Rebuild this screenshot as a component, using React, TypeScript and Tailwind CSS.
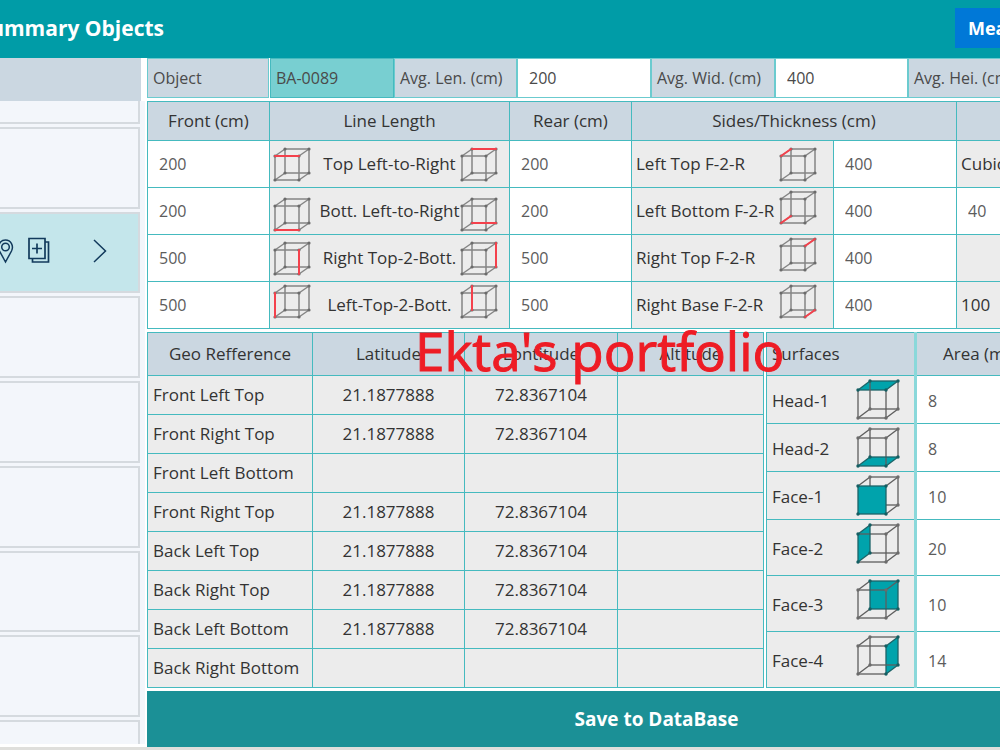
import type { ReactNode } from "react"
import clsx from "clsx"

type Point = [number, number]
type Vertex = "ftl" | "ftr" | "fbl" | "fbr" | "btl" | "btr" | "bbl" | "bbr"

interface LineRow {
	front: string
	label: string
	frontEdge: [Vertex, Vertex]
	rearEdge: [Vertex, Vertex]
	rear: string
	side: string
	sideEdge: [Vertex, Vertex]
	thickness: string
	align: string
	sideAlign: string
}

interface SurfaceRow {
	name: string
	face: Vertex[]
	area: string
	height: string
}

const EDGES: [Vertex, Vertex][] = [
	["ftl", "ftr"],
	["fbl", "fbr"],
	["ftl", "fbl"],
	["ftr", "fbr"],
	["btl", "btr"],
	["bbl", "bbr"],
	["btl", "bbl"],
	["btr", "bbr"],
	["ftl", "btl"],
	["ftr", "btr"],
	["fbl", "bbl"],
	["fbr", "bbr"],
]

// f/b = front/back, t/b = top/bottom, l/r = left/right
const SMALL_CUBE: Record<Vertex, Point> = {
	ftl: [2, 9],
	ftr: [26, 9],
	fbl: [2, 33],
	fbr: [26, 33],
	btl: [12, 2],
	btr: [36, 2],
	bbl: [12, 26],
	bbr: [36, 26],
}

const LARGE_CUBE: Record<Vertex, Point> = {
	ftl: [2, 11],
	ftr: [30, 11],
	fbl: [2, 39],
	fbr: [30, 39],
	btl: [14, 2],
	btr: [42, 2],
	bbl: [14, 30],
	bbr: [42, 30],
}

const lineRows: LineRow[] = [
	{
		front: "200",
		label: "Top Left-to-Right",
		frontEdge: ["ftl", "ftr"],
		rearEdge: ["btl", "btr"],
		rear: "200",
		side: "Left Top F-2-R",
		sideEdge: ["ftl", "btl"],
		thickness: "400",
		align: "items-center",
		sideAlign: "items-center",
	},
	{
		front: "200",
		label: "Bott. Left-to-Right",
		frontEdge: ["fbl", "fbr"],
		rearEdge: ["bbl", "bbr"],
		rear: "200",
		side: "Left Bottom F-2-R",
		sideEdge: ["fbl", "bbl"],
		thickness: "400",
		align: "items-end",
		sideAlign: "items-start",
	},
	{
		front: "500",
		label: "Right Top-2-Bott.",
		frontEdge: ["ftr", "fbr"],
		rearEdge: ["btr", "bbr"],
		rear: "500",
		side: "Right Top F-2-R",
		sideEdge: ["ftr", "btr"],
		thickness: "400",
		align: "items-center",
		sideAlign: "items-start",
	},
	{
		front: "500",
		label: "Left-Top-2-Bott.",
		frontEdge: ["ftl", "fbl"],
		rearEdge: ["btl", "bbl"],
		rear: "500",
		side: "Right Base F-2-R",
		sideEdge: ["fbr", "bbr"],
		thickness: "400",
		align: "items-start",
		sideAlign: "items-start",
	},
]

const geoRows: [string, string, string][] = [
	["Front Left Top", "21.1877888", "72.8367104"],
	["Front Right Top", "21.1877888", "72.8367104"],
	["Front Left Bottom", "", ""],
	["Front Right Top", "21.1877888", "72.8367104"],
	["Back Left Top", "21.1877888", "72.8367104"],
	["Back Right Top", "21.1877888", "72.8367104"],
	["Back Left Bottom", "21.1877888", "72.8367104"],
	["Back Right Bottom", "", ""],
]

const surfaceRows: SurfaceRow[] = [
	{ name: "Head-1", face: ["ftl", "ftr", "btr", "btl"], area: "8", height: "h-12" },
	{ name: "Head-2", face: ["fbl", "fbr", "bbr", "bbl"], area: "8", height: "h-12" },
	{ name: "Face-1", face: ["ftl", "ftr", "fbr", "fbl"], area: "10", height: "h-12" },
	{ name: "Face-2", face: ["ftl", "btl", "bbl", "fbl"], area: "20", height: "h-14" },
	{ name: "Face-3", face: ["btl", "btr", "bbr", "bbl"], area: "10", height: "h-14" },
	{ name: "Face-4", face: ["ftr", "btr", "bbr", "fbr"], area: "14", height: "h-14" },
]

const EdgeCube = ({ edge }: { edge: [Vertex, Vertex] }) => {
	const [a, b] = edge
	return (
		<svg className="shrink-0" width="38" height="35" viewBox="0 0 38 35" aria-hidden="true">
			{EDGES.map(([from, to]) => (
				<line
					key={from + to}
					x1={SMALL_CUBE[from][0]}
					y1={SMALL_CUBE[from][1]}
					x2={SMALL_CUBE[to][0]}
					y2={SMALL_CUBE[to][1]}
					stroke="#858585"
					strokeWidth="1.5"
				/>
			))}
			{Object.entries(SMALL_CUBE).map(([name, [x, y]]) => (
				<circle key={name} cx={x} cy={y} r="1.6" fill="#6b6b6b" />
			))}
			<line
				x1={SMALL_CUBE[a][0]}
				y1={SMALL_CUBE[a][1]}
				x2={SMALL_CUBE[b][0]}
				y2={SMALL_CUBE[b][1]}
				stroke="#f4414c"
				strokeWidth="2"
				strokeLinecap="round"
			/>
		</svg>
	)
}

const FaceCube = ({ face }: { face: Vertex[] }) => {
	const isFront = face.every((v) => v.startsWith("f"))
	const isBehind = (v: Vertex) => isFront && v === "bbl"
	const behind = EDGES.filter(([from, to]) => isBehind(from) || isBehind(to))
	const visible = EDGES.filter((edge) => !behind.includes(edge))

	const renderEdge = ([from, to]: [Vertex, Vertex]) => (
		<line
			key={from + to}
			x1={LARGE_CUBE[from][0]}
			y1={LARGE_CUBE[from][1]}
			x2={LARGE_CUBE[to][0]}
			y2={LARGE_CUBE[to][1]}
			stroke={face.includes(from) && face.includes(to) ? "#1c6468" : "#5e5e5e"}
			strokeWidth="1.3"
		/>
	)

	return (
		<svg className="shrink-0 self-start" width="44" height="41" viewBox="0 0 44 41" aria-hidden="true">
			{behind.map(renderEdge)}
			<polygon points={face.map((v) => LARGE_CUBE[v].join(",")).join(" ")} fill="#00a3ac" />
			{visible.map(renderEdge)}
			{(Object.keys(LARGE_CUBE) as Vertex[])
				.filter((v) => !isBehind(v))
				.map((v) => (
					<circle
						key={v}
						cx={LARGE_CUBE[v][0]}
						cy={LARGE_CUBE[v][1]}
						r="1.7"
						fill={face.includes(v) ? "#145e62" : "#6b6b6b"}
					/>
				))}
		</svg>
	)
}

const HeadCell = ({ children, className, colSpan }: { children?: ReactNode; className?: string; colSpan?: number }) => (
	<th
		colSpan={colSpan}
		className={clsx("border border-[#45babf] bg-[#cbd7e1] p-0 font-normal whitespace-nowrap overflow-hidden", className)}>
		{children}
	</th>
)

const InputCell = ({ label, value, className }: { label: string; value: string; className?: string }) => (
	<td className={clsx("border border-[#45babf] bg-white p-0", className)}>
		<input
			aria-label={label}
			defaultValue={value}
			className="block w-full bg-transparent px-[11px] text-base text-[#5c5c5c] outline-none"
		/>
	</td>
)

const SideCard = ({ className, children }: { className?: string; children?: ReactNode }) => (
	<div className={clsx("mr-[5px] border-y-2 border-r-2 border-[#d5dadf]", className)}>{children}</div>
)

const Sidebar = () => (
	<aside className="flex w-[145px] shrink-0 flex-col pb-[3px]">
		<div className="mr-1 h-[43px] shrink-0 bg-[#cbd7e1]" />
		<div className="flex flex-1 flex-col gap-[3px] bg-[#f3f6fb]">
			<SideCard className="h-[23px] shrink-0 border-t-0" />
			<SideCard className="flex-1" />
			<SideCard className="flex flex-1 bg-[#c4e6eb]">
				<div className="flex items-center pb-1 text-[#123a5c]">
					<button type="button" aria-label="Locate" className="mr-[14px]">
						<svg width="14" height="26" viewBox="0 0 14 26" fill="none" stroke="currentColor" strokeWidth="1.5">
							<path d="M5.5 24 L-0.5 13 C-3 8 0 2 5.5 2 C11 2 14 8 11.500 13 Z" />
							<circle cx="5.500" cy="9" r="3.800" />
						</svg>
					</button>
					<button type="button" aria-label="Add copy">
						<svg width="22" height="28" viewBox="0 0 22 28" fill="none" stroke="currentColor" strokeWidth="1.7">
							<path d="M1 1.500 H17 V21.500 H1 Z" />
							<path d="M17 5 H20.500 V25 H4.500 V21.500" />
							<path d="M9 6.500 V16.500 M4 11.500 H14" />
						</svg>
					</button>
					<button type="button" aria-label="Open" className="ml-[43px]">
						<svg width="14" height="24" viewBox="0 0 14 24" fill="none" stroke="currentColor" strokeWidth="1.5">
							<path d="M1 1 L12.500 12 L1 23" />
						</svg>
					</button>
				</div>
			</SideCard>
			<SideCard className="flex-1" />
			<SideCard className="flex-1" />
			<SideCard className="flex-1" />
			<SideCard className="flex-1" />
			<SideCard className="flex-1" />
			<SideCard className="h-6 shrink-0 border-b-0" />
		</div>
	</aside>
)

const summaryBox = "flex items-center border border-[#6bcbcf] bg-[#cbd7e1] px-[5px] whitespace-nowrap"
const summaryInput = "w-full min-w-0 border border-[#6bcbcf] bg-white px-[11px] text-base outline-none"

const SummaryBar = () => (
	<div className="grid h-10 grid-cols-[123px_124px_123px_134px_124px_133px_1fr] text-base text-[#4a4a4a]">
		<span className={clsx(summaryBox, "mr-px")}>Object</span>
		<span className="flex items-center border border-[#45babf] bg-[#78cfd1] px-[5px]">BA-0089</span>
		<label htmlFor="avg-len" className={summaryBox}>
			Avg. Len. (cm)
		</label>
		<input id="avg-len" defaultValue="200" className={summaryInput} />
		<label htmlFor="avg-wid" className={summaryBox}>
			Avg. Wid. (cm)
		</label>
		<input id="avg-wid" defaultValue="400" className={summaryInput} />
		<span className={clsx(summaryBox, "overflow-hidden border-r-0")}>Avg. Hei. (cm)</span>
	</div>
)

const LineTable = () => (
	<table className="w-full table-fixed border-collapse">
		<colgroup>
			<col className="w-[122px]" />
			<col className="w-[240px]" />
			<col className="w-[122px]" />
			<col className="w-[202px]" />
			<col className="w-[123px]" />
			<col />
		</colgroup>
		<thead>
			<tr>
				<HeadCell className="h-[39px]">Front (cm)</HeadCell>
				<HeadCell>Line Length</HeadCell>
				<HeadCell>Rear (cm)</HeadCell>
				<HeadCell colSpan={2}>Sides/Thickness (cm)</HeadCell>
				<HeadCell className="border-r-0" />
			</tr>
		</thead>
		<tbody>
			{lineRows.map((row, i) => (
				<tr key={row.label}>
					<InputCell label={`Front ${row.label}`} value={row.front} className="h-[47px]" />
					<td className="border border-[#45babf] bg-[#ececec] p-0">
						<div className={clsx("flex h-[42px] pr-[11px] pl-[3px]", row.align)}>
							<EdgeCube edge={row.frontEdge} />
							<span className="ml-2 flex-1 self-center text-center whitespace-nowrap">{row.label}</span>
							<EdgeCube edge={row.rearEdge} />
						</div>
					</td>
					<InputCell label={`Rear ${row.label}`} value={row.rear} />
					<td className="border border-[#45babf] bg-[#ececec] p-0">
						<div className={clsx("flex h-[42px] justify-between pr-4 pl-1", row.sideAlign)}>
							<span className="self-center whitespace-nowrap">{row.side}</span>
							<EdgeCube edge={row.sideEdge} />
						</div>
					</td>
					<InputCell label={row.side} value={row.thickness} />
					{i === 1 ? (
						<InputCell label="Cubic" value="40" className="border-r-0" />
					) : (
						<td className="overflow-hidden border border-r-0 border-[#45babf] bg-[#ececec] py-0 pr-0 pl-1">
							{["Cubic", "", "", "100"][i]}
						</td>
					)}
				</tr>
			))}
		</tbody>
	</table>
)

const GeoTable = () => (
	<table className="w-[617px] shrink-0 table-fixed border-collapse">
		<colgroup>
			<col className="w-[165px]" />
			<col className="w-[152px]" />
			<col className="w-[153px]" />
			<col />
		</colgroup>
		<thead>
			<tr>
				<HeadCell className="h-[43px]">Geo Refference</HeadCell>
				<HeadCell>Latitude</HeadCell>
				<HeadCell>Lontitude</HeadCell>
				<HeadCell>Altitude</HeadCell>
			</tr>
		</thead>
		<tbody>
			{geoRows.map(([name, lat, lon], i) => (
				<tr key={i} className="bg-[#ececec] text-center">
					<td className="h-[39px] border border-[#45babf] py-0 pr-0 pl-[5px] text-left">{name}</td>
					<td className="border border-[#45babf] p-0">{lat}</td>
					<td className="border border-[#45babf] p-0">{lon}</td>
					<td className="border border-[#45babf] p-0" />
				</tr>
			))}
		</tbody>
	</table>
)

const SurfaceTable = () => (
	<table className="w-full table-fixed border-collapse">
		<colgroup>
			<col className="w-[149px]" />
			<col />
		</colgroup>
		<thead>
			<tr>
				<HeadCell className="h-[43px] pl-[5px] text-left">Surfaces</HeadCell>
				<HeadCell className="border-r-0 border-l-[3px] border-l-[#8ad8da] pl-[26px] text-left">Area (m²)</HeadCell>
			</tr>
		</thead>
		<tbody>
			{surfaceRows.map((row) => (
				<tr key={row.name}>
					<td className={clsx("border border-[#45babf] bg-[#ececec] py-0 pr-[14px] pl-[5px]", row.height)}>
						<div className={clsx("-my-1 flex items-center justify-between pt-[3px]", row.height)}>
							<span>{row.name}</span>
							<FaceCube face={row.face} />
						</div>
					</td>
					<InputCell
						label={`${row.name} area`}
						value={row.area}
						className="border-r-0 border-l-[3px] border-l-[#8ad8da] pt-[2px]"
					/>
				</tr>
			))}
		</tbody>
	</table>
)

export default function App() {
	return (
		<div className="overflow-hidden border-b-[3px] border-[#dfdfdc] bg-white font-['Open_Sans','Noto_Sans',sans-serif] text-[17px] leading-6 text-[#333]">
			<header className="flex h-[58px] items-center justify-between bg-[#009ca7] pb-[2px]">
				<div className="flex w-[164px] justify-end overflow-hidden">
					<h1 className="text-[21px] leading-8 font-bold whitespace-nowrap text-white">Summary Objects</h1>
				</div>
				<button type="button" className="h-10 w-[45px] overflow-hidden bg-[#0078d7] pl-[13px] text-left text-lg font-bold text-white">
					Measure
				</button>
			</header>
			<div className="flex">
				<Sidebar />
				<main className="flex min-w-0 flex-1 flex-col pl-[2px]">
					<SummaryBar />
					<div className="mt-[3px]">
						<LineTable />
					</div>
					<div className="relative mt-[3px] flex gap-[2px]">
						<GeoTable />
						<div className="min-w-0 flex-1">
							<SurfaceTable />
						</div>
						<p className="pointer-events-none absolute -top-4 left-[268px] text-[53px] leading-[70px] whitespace-nowrap text-[#ee1c25] [-webkit-text-stroke:1px_#ee1c25]">
							Ekta's portfolio
						</p>
					</div>
					<button type="button" className="mt-[3px] h-14 w-full bg-[#1b9096] pl-[166px] text-[19px] font-bold text-white">
						Save to DataBase
					</button>
				</main>
			</div>
		</div>
	)
}
